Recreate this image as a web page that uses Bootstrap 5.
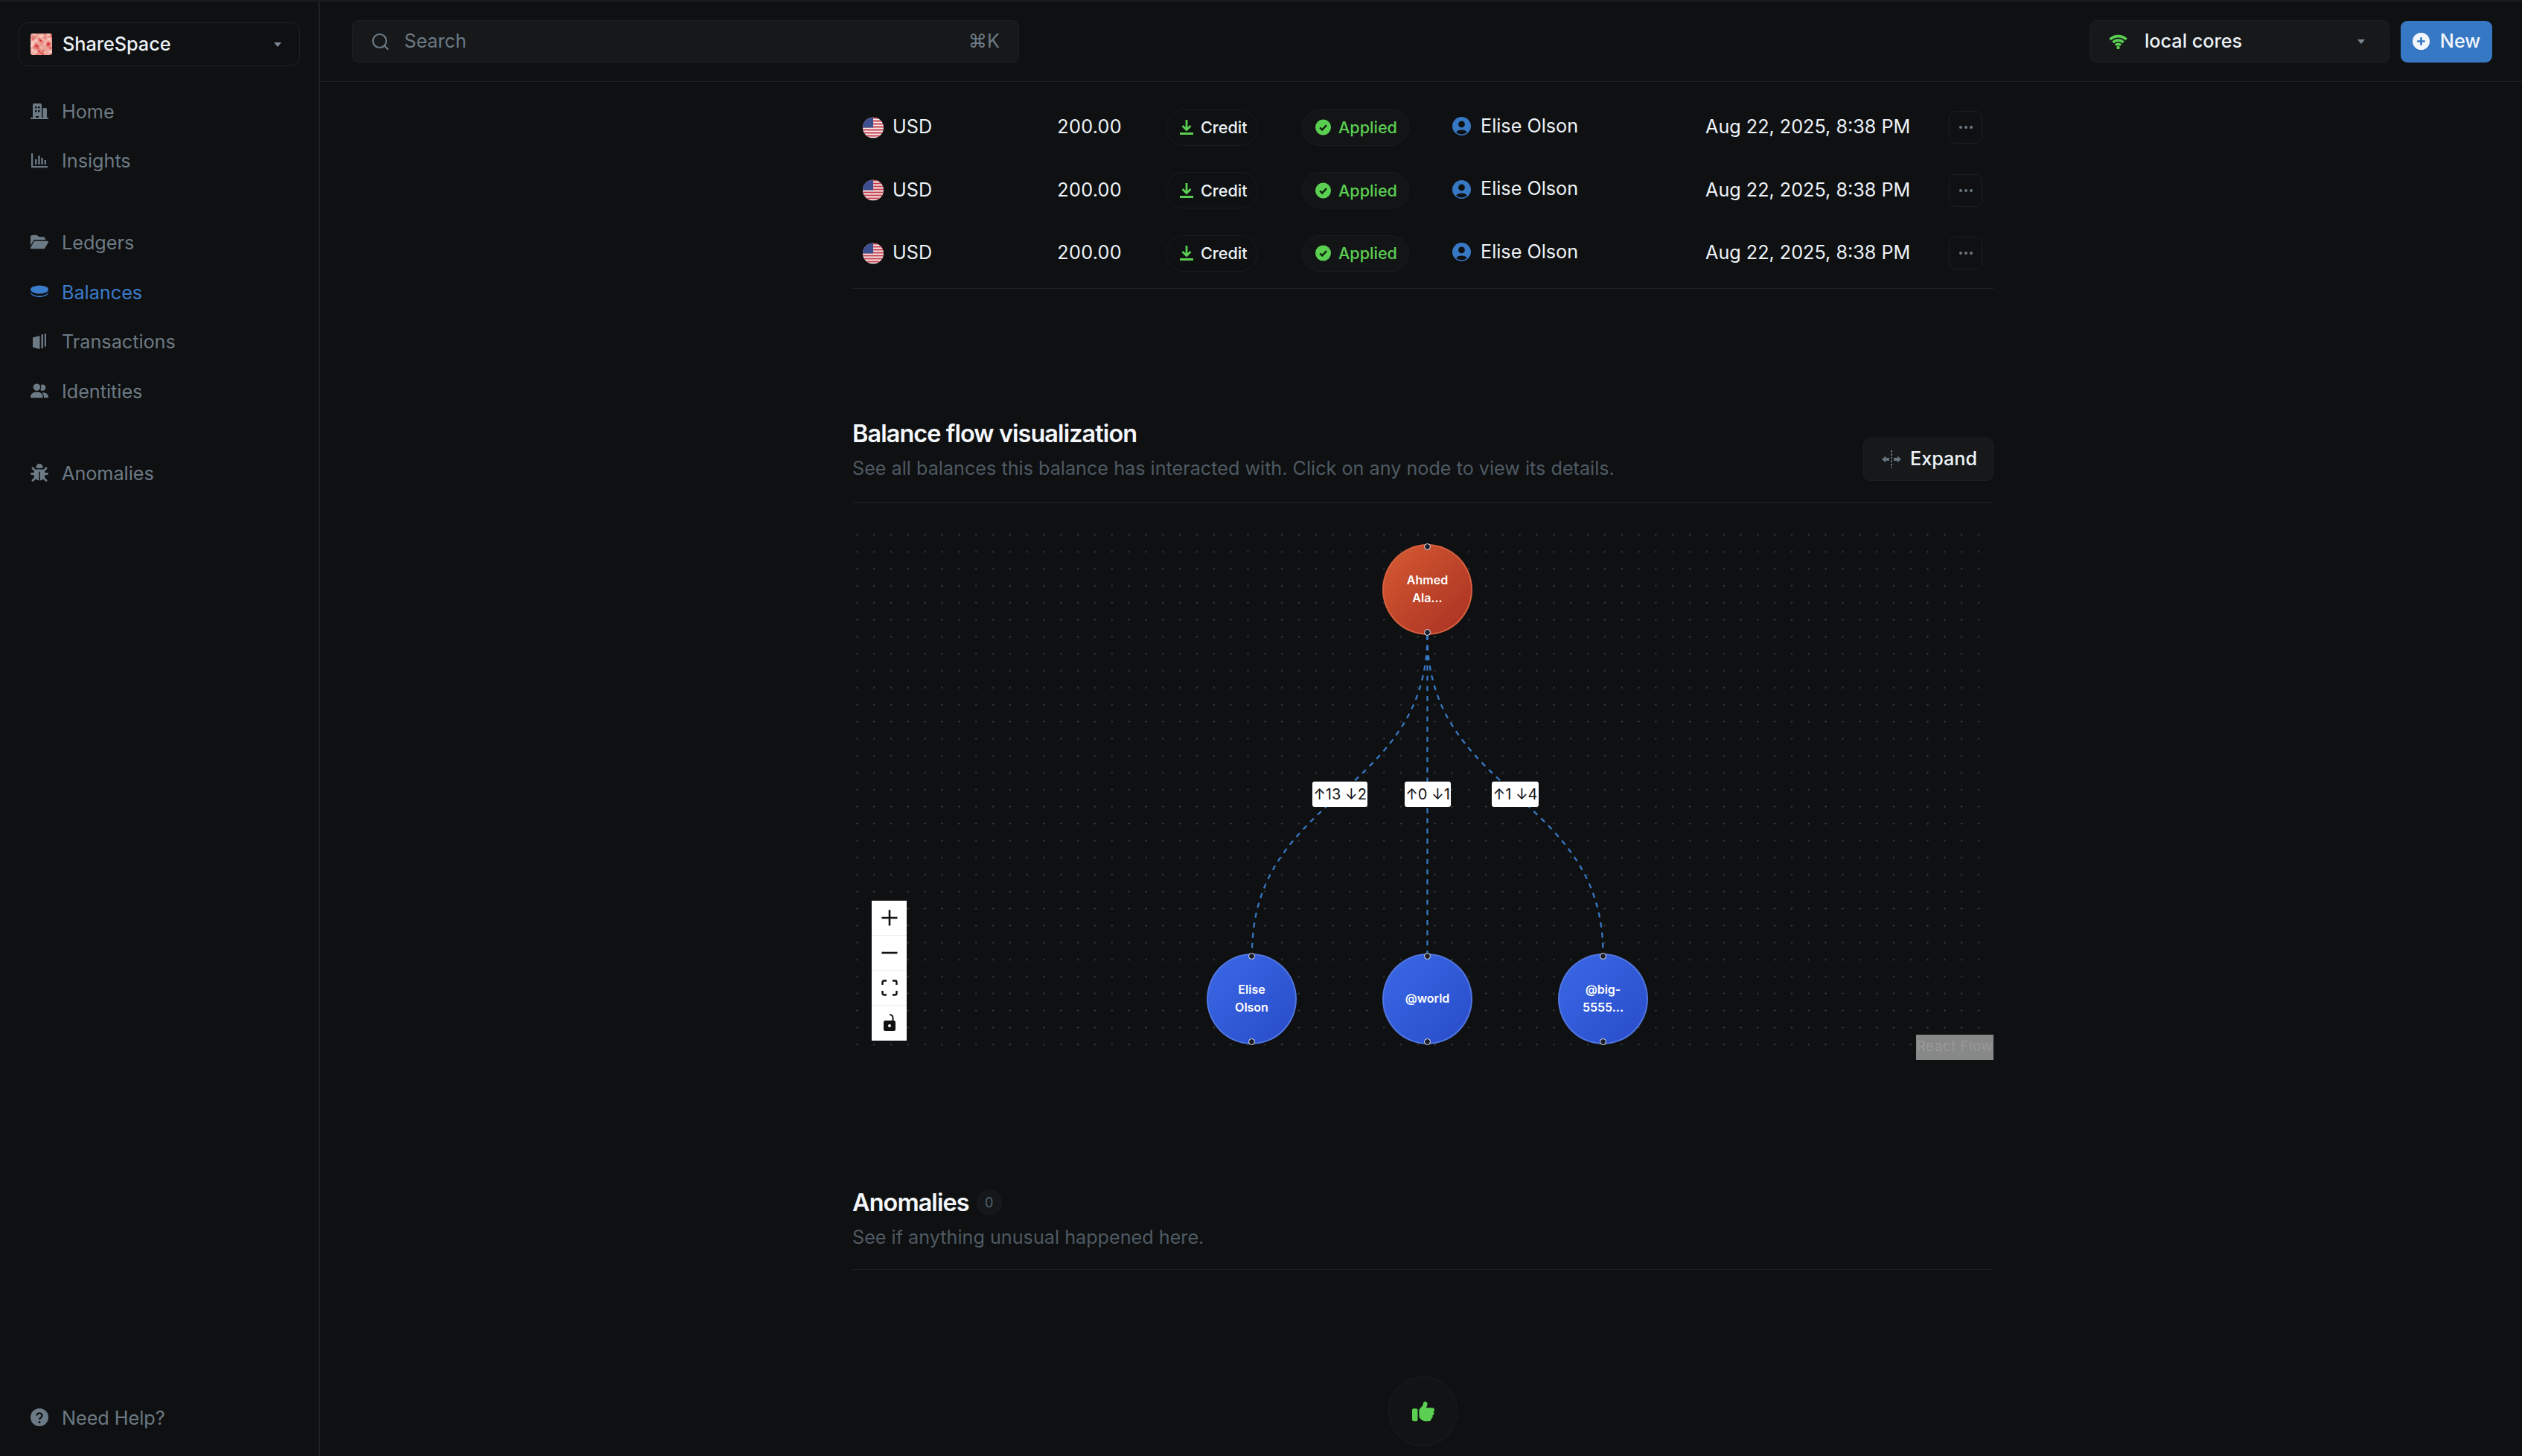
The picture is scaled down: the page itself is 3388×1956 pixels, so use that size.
<!DOCTYPE html>
<html lang="en">
<head>
<meta charset="utf-8">
<title>ShareSpace</title>
<link href="https://cdn.jsdelivr.net/npm/bootstrap@5.3.0/dist/css/bootstrap.min.css" rel="stylesheet">
<style>
:root{--pg:#0f1011;--line:#1e2123;--surf:#16181a;--mut:#6c7a85;--txt:#edf2f7;--sub:#4e5a64;--grn:#5bcf52;--blu:#3778c4}
html,body{height:100%}
body{background:var(--pg);color:var(--txt);font-family:Inter,"Liberation Sans",sans-serif;font-size:25.2px;overflow:hidden}
.shell{height:1956px;border-top:2px solid #191b1c}
.side{width:430px;flex:none;border-right:2px solid var(--line);padding:28px 25px 17px 25px}
.switcher{height:59px;border:1px solid var(--line);border-radius:13px;padding:0 24px 0 15px;margin-bottom:28.5px;font-size:25.2px;font-weight:500}
.logo{width:29px;height:29px;border-radius:3px;margin-right:14px;flex:none}
.caret{width:0;height:0;border-left:5.5px solid transparent;border-right:5.500px solid transparent;border-top:6px solid #7d8891}
.side .nav-link{height:66.5px;padding:0 0 0 16px;color:var(--mut);font-size:25.2px;display:flex;align-items:center;gap:18px}
.side .nav-link.current{color:#3b7ccb}
.nico{width:24px;height:24px;fill:currentColor;flex:none;margin-top:-4px}
.navgroup{margin-bottom:43.5px}
.topbar{height:108px;border-bottom:1px solid var(--line);padding:0 40px 0 43px}
.searchbox{width:896px;height:58px;background:var(--surf);border:1px solid #1b1e20;border-radius:9px;padding:1px 25px 0;color:var(--mut);font-size:25.2px}
.searchbox svg{width:24px;height:24px;margin-right:20px}
.core{width:403px;height:58px;background:var(--surf);border:1px solid #1b1e20;border-radius:9px;padding:0 32px 0 25px;margin-right:15px;font-size:25.2px;font-weight:500}
.core svg{width:25px;height:20px;margin-right:23px}
.btn-new{width:123px;height:56px;background:var(--blu);color:#f1f6fc;border:0;border-radius:9px;font-size:25.2px;font-weight:500;padding:0;gap:14px}
.btn-new svg{width:23px;height:23px}
.col-wrap{width:1533px;margin-left:715px;padding-top:19px}
.tx-table{table-layout:fixed;width:100%;margin:0 0 4px;--bs-table-bg:transparent;--bs-table-color:var(--txt);border-bottom:0}
.tx-table td{height:84.5px;padding:0;vertical-align:middle;font-size:25.2px;border:0;color:var(--txt)}
.c1{width:255px}.c2{width:152px}.c3{width:183px}.c4{width:202px}.c5{width:293px}.c6{width:370px}.c7{width:78px}
.tx-table td.p14{padding-left:14px}
.tx-table td.amt{text-align:right;padding-right:45px;letter-spacing:.3px}
.tx-table td.dt{padding-left:61px}
.tx-table td.act{padding-left:18px}
.flag{width:28px;height:29px;margin-right:12px;flex:none}
.pill{height:49px;border:1px solid #1a1d1f;border-radius:25px;font-size:21.6px;font-weight:500;gap:10px}
.pill svg{width:18px;height:20px}
.pill-credit{width:124px;padding:0 0 0 18px}
.pill-status{width:144px;color:var(--grn);background:#121415;padding:0 0 0 17px}
.pill-status svg{width:21px;height:22px}
.who svg{width:25px;height:25px;margin-right:13px}
.who{margin-top:-3px}
.more{width:45px;height:44px;border:1px solid #1c1f21;border-radius:9px}
.more svg{width:20px;height:6px}
.tbl-end{border-bottom:1px solid var(--line)}
.sec-head{border-bottom:1px solid var(--line);padding-bottom:28px;margin-top:175px}
.sec-title{font-size:32.4px;font-weight:600;line-height:40px;margin:0;letter-spacing:-.028em;color:#f4f8fc}
.sec-sub{font-size:25.2px;line-height:36px;margin:8px 0 0;color:var(--sub)}
.btn-expand{width:175px;height:58px;background:var(--surf);border:1px solid #1b1e20;border-radius:9px;color:var(--txt);font-size:25.2px;font-weight:500;padding:0 0 0 24px;gap:12px;margin-bottom:1px}
.btn-expand svg{width:26px;height:24px}
.flow{height:717px;margin-top:31px;background-image:radial-gradient(circle,#33363a 1px,transparent 1.4px);background-size:22.83px 22.83px;background-position:-5px 0;overflow:hidden}
.edges{position:absolute;left:0;top:0;width:100%;height:100%}
.edges path{fill:none;stroke:#3778c4;stroke-width:2.3;stroke-dasharray:6.84 6.84}
.fnode{position:absolute;width:121px;height:122px;border-radius:50%;display:flex;align-items:center;justify-content:center;text-align:center;font-size:16px;font-weight:600;line-height:23.5px;color:#fff}
.fnode-red{background:linear-gradient(135deg,#d65a32,#a83122);border:2px solid #d9603f;left:712px;top:24px}
.fnode-blue{background:linear-gradient(135deg,#3a68e6,#284cc9);border:2px solid #5176e0;top:574px}
.n1{left:476px}.n2{left:712px}.n3{left:948px}
.hdl{position:absolute;left:50%;width:9px;height:9px;margin-left:-4.5px;border-radius:50%;background:#1b1e2c;border:1px solid #e6e9ef}
.hdl-t{top:-3px}.hdl-b{bottom:-3px}
.elabel{position:absolute;top:343px;height:34px;background:#fff;color:#111;border-radius:3px;font-size:20px;display:flex;align-items:center;justify-content:center;white-space:nowrap}
.l1{left:618px;width:74px}.l2{left:742px;width:62px}.l3{left:859px;width:63px}
.zoombar{position:absolute;left:26px;top:503px;width:47px;background:#fff}
.zoombar div{height:47px;border-bottom:1px solid #eee}
.zoombar div:last-child{border:0}
.zoombar svg{width:24px;height:24px}
.attrib{position:absolute;right:0;bottom:0;width:104px;height:34px;background:rgba(255,255,255,.5);color:#999;font-size:19px;letter-spacing:.02em}
.count{width:34px;height:35px;border-radius:50%;background:#14181a;color:#56626c;font-size:18px;margin-left:10px}
.anom-head{margin-top:172px;border-bottom:1px solid var(--line);padding-bottom:25px}
.anom-head .sec-sub{margin-top:8px}
.okbadge{width:93px;height:94px;border:1px solid #1a1d1f;border-radius:50%;background:#111314;margin:143px auto 0}
.okbadge svg{width:30px;height:30px;fill:var(--grn)}
</style>
</head>
<body>
<div class="shell d-flex">
  <aside class="side d-flex flex-column">
    <div class="switcher d-flex align-items-center">
      <svg class="logo" viewBox="0 0 29 29"><defs><filter id="marble" x="0" y="0" width="100%" height="100%"><feTurbulence type="fractalNoise" baseFrequency=".14" numOctaves="3" seed="7"/><feColorMatrix values="0.5 0 0 0 0.58  1.3 0 0 0 -0.32  1.1 0 0 0 -0.26  0 0 0 0 1"/></filter></defs><rect width="29" height="29" filter="url(#marble)"/></svg>
      <span class="flex-fill">ShareSpace</span><span class="caret"></span>
    </div>
    <nav class="nav flex-column navgroup">
      <a class="nav-link" href="#"><svg class="nico" viewBox="0 0 24 24"><path fill-rule="evenodd" d="M3 22V3.600A1.600 1.600 0 0 1 4.600 2h8.800A1.600 1.600 0 0 1 15 3.600V22h-4v-3H7v3zM6 6v2.500h2.500V6zm4 0v2.500h2.500V6zm-4 5v2.500h2.500V11zm4 0v2.500h2.500V11z"/><path d="M16.500 8h4A1.500 1.500 0 0 1 22 9.500V22h-5.500zM0 21h24v2H0z"/></svg>Home</a>
      <a class="nav-link" href="#"><svg class="nico" viewBox="0 0 24 24"><path d="M1 3h2.200v17H23v2.200H1zM6 11h2.400v7H6zM10.200 6h2.400v12h-2.400zM14.400 9h2.400v9h-2.400zM18.600 12H21v6h-2.400z"/></svg>Insights</a>
    </nav>
    <nav class="nav flex-column navgroup">
      <a class="nav-link" href="#"><svg class="nico" viewBox="0 0 576 512"><path d="M88.700 223.800L0 375.800V96C0 60.700 28.700 32 64 32H181.500c17 0 33.300 6.700 45.300 18.700l26.500 26.500c12 12 28.300 18.700 45.300 18.700H416c35.300 0 64 28.700 64 64v32H144c-22.800 0-43.800 12.100-55.300 31.800zm27.600 16.100C122.100 230 132.600 224 144 224H544c11.500 0 22 6.100 27.700 16.100s5.700 22.200-.1 32.100l-112 192C453.900 474 443.400 480 432 480H32c-11.500 0-22-6.100-27.700-16.100s-5.700-22.200 .1-32.100l112-192z"/></svg>Ledgers</a>
      <a class="nav-link current" href="#"><svg class="nico" viewBox="0 0 24 24"><ellipse cx="12" cy="9" rx="12" ry="5.500"/><path d="M0 11.500C1 15.500 6 17.500 12 17.500s11-2 12-6v1.500c-.5 3.800-5.500 6-12 6S.5 16.800 0 13z"/></svg>Balances</a>
      <a class="nav-link" href="#"><svg class="nico" viewBox="0 0 24 24"><path d="M3 7.500 12.500 5v18L3 20.500z"/><path d="M14.500 3.500 17 3v18.500l-2.500.5zM18.800 2.500 21 2v17.200l-2.200.6z"/></svg>Transactions</a>
      <a class="nav-link" href="#"><svg class="nico" viewBox="0 0 640 512"><path d="M96 128a128 128 0 1 1 256 0A128 128 0 1 1 96 128zM0 482.300C0 383.800 79.800 304 178.300 304h91.400C368.200 304 448 383.800 448 482.300c0 16.400-13.300 29.700-29.700 29.700H29.700C13.300 512 0 498.700 0 482.300zM609.300 512H471.400c5.400-9.400 8.600-20.300 8.600-32v-8c0-60.700-27.100-115.200-69.800-151.800c2.400-.1 4.700-.2 7.100-.2h61.400C567.800 320 640 392.200 640 481.300c0 17-13.800 30.700-30.700 30.700zM432 256c-31 0-59-12.600-79.300-32.900C372.400 196.500 384 163.600 384 128c0-26.800-6.600-52.100-18.300-74.300C384.300 40.100 407.200 32 432 32c61.900 0 112 50.100 112 112s-50.100 112-112 112z"/></svg>Identities</a>
    </nav>
    <nav class="nav flex-column">
      <a class="nav-link" href="#"><svg class="nico" viewBox="0 0 512 512"><path d="M256 0c53 0 96 43 96 96v3.600c0 15.700-12.700 28.400-28.400 28.400H188.400c-15.700 0-28.400-12.700-28.400-28.400V96c0-53 43-96 96-96zM41.400 105.400c12.500-12.500 32.800-12.500 45.300 0l64 64c.7 .7 1.300 1.400 1.900 2.100c14.200-7.300 30.400-11.400 47.500-11.400H312c17.100 0 33.200 4.100 47.500 11.400c.6-.7 1.200-1.400 1.900-2.100l64-64c12.500-12.500 32.800-12.500 45.300 0s12.500 32.800 0 45.300l-64 64c-.7 .7-1.400 1.300-2.100 1.900c6.200 12 10.100 25.300 11.100 39.500H480c17.700 0 32 14.300 32 32s-14.300 32-32 32H416c0 24.600-5.500 47.800-15.400 68.600c2.200 1.300 4.200 2.900 6 4.800l64 64c12.500 12.500 12.500 32.800 0 45.300s-32.800 12.500-45.300 0l-63.100-63.100c-24.500 21.800-55.800 36.200-90.300 39.600V240c0-8.800-7.200-16-16-16s-16 7.200-16 16V479.200c-34.500-3.400-65.800-17.800-90.300-39.600L86.600 502.600c-12.500 12.500-32.800 12.500-45.300 0s-12.500-32.800 0-45.300l64-64c1.900-1.900 3.900-3.400 6-4.800C101.500 367.800 96 344.600 96 320H32c-17.700 0-32-14.300-32-32s14.300-32 32-32H96.300c1.100-14.100 5-27.500 11.100-39.500c-.7-.6-1.400-1.200-2.100-1.900l-64-64c-12.500-12.500-12.500-32.800 0-45.300z"/></svg>Anomalies</a>
    </nav>
    <nav class="nav flex-column mt-auto">
      <a class="nav-link" href="#"><svg class="nico" viewBox="0 0 24 24"><circle cx="12" cy="12" r="12"/><path d="M8.500 9.500a3.500 3.200 0 1 1 5.500 2.700c-1.300.9-2 1.400-2 2.800" fill="none" stroke="#0f1011" stroke-width="2.400"/><circle cx="12" cy="18.500" r="1.500" fill="#0f1011"/></svg>Need Help?</a>
    </nav>
  </aside>
  <main class="flex-fill overflow-hidden">
    <header class="topbar d-flex align-items-center">
      <div class="searchbox d-flex align-items-center">
        <svg viewBox="0 0 24 24" fill="none" stroke="#6c7a85" stroke-width="2.200"><circle cx="11" cy="11" r="9"/><path d="m17.500 17.500 5 5"/></svg>
        <span class="flex-fill">Search</span><span>⌘K</span>
      </div>
      <div class="core d-flex align-items-center ms-auto">
        <svg viewBox="0 0 25 20" fill="none" stroke="#5bcf52" stroke-width="3.600"><path d="M1.500 7a16 16 0 0 1 22 0M5.500 11a10 10 0 0 1 14 0M9 14.800a5 5 0 0 1 7 0"/><circle cx="12.500" cy="18" r="2.200" fill="#5bcf52" stroke="none"/></svg>
        <span class="flex-fill">local cores</span><span class="caret"></span>
      </div>
      <button class="btn btn-new d-flex align-items-center justify-content-center" type="button"><svg viewBox="0 0 24 24"><circle cx="12" cy="12" r="12" fill="#f1f6fc"/><path d="M12 6.500v11M6.500 12h11" stroke="#3778c4" stroke-width="2.800"/></svg>New</button>
    </header>
    <div class="col-wrap">
      <div class="tbl-end">
      <table class="table tx-table">
        <colgroup><col class="c1"><col class="c2"><col class="c3"><col class="c4"><col class="c5"><col class="c6"><col class="c7"></colgroup>
        <tbody>
        <tr>
          <td class="p14"><div class="d-flex align-items-center"><svg class="flag" viewBox="0 0 28 28"><defs><clipPath id="fc"><circle cx="14" cy="14" r="14"/></clipPath></defs><g clip-path="url(#fc)"><rect width="28" height="28" fill="#f3ecec"/><path d="M0 0h28v2H0zM0 4h28v2H0zM0 8h28v2H0zM0 12h28v2H0zM0 16h28v2H0zM0 20h28v2H0zM0 24h28v2H0z" fill="#c9404f"/><rect width="14" height="14" fill="#3b4f8f"/></g></svg>USD</div></td>
          <td class="amt">200.00</td>
          <td class="p14"><div class="pill pill-credit d-inline-flex align-items-center"><svg viewBox="0 0 18 20"><path d="M9 0v13M3.500 8 9 13.500 14.500 8" fill="none" stroke="#5bcf52" stroke-width="2.800"/><path d="M0 17h18v3H0z" fill="#5bcf52"/></svg>Credit</div></td>
          <td class="p14"><div class="pill pill-status d-inline-flex align-items-center"><svg viewBox="0 0 22 22"><circle cx="11" cy="11" r="11" fill="#5bcf52"/><path d="m6.500 11.300 3.200 3.200 6-6.500" fill="none" stroke="#10230f" stroke-width="2.600"/></svg>Applied</div></td>
          <td class="p14"><div class="who d-flex align-items-center"><svg viewBox="0 0 24 24"><circle cx="12" cy="12" r="12" fill="#3778c4"/><circle cx="12" cy="9.500" r="4.200" fill="#0f1011"/><path d="M5 20a7.500 5 0 0 1 14 0 11 11 0 0 1-14 0" fill="#0f1011"/></svg>Elise Olson</div></td>
          <td class="dt">Aug 22, 2025, 8:38 PM</td>
          <td class="act"><div class="more d-flex align-items-center justify-content-center"><svg viewBox="0 0 20 6" fill="#6c7a85"><circle cx="3" cy="3" r="2"/><circle cx="10" cy="3" r="2"/><circle cx="17" cy="3" r="2"/></svg></div></td>
        </tr>
        <tr>
          <td class="p14"><div class="d-flex align-items-center"><svg class="flag" viewBox="0 0 28 28"><g clip-path="url(#fc)"><rect width="28" height="28" fill="#f3ecec"/><path d="M0 0h28v2H0zM0 4h28v2H0zM0 8h28v2H0zM0 12h28v2H0zM0 16h28v2H0zM0 20h28v2H0zM0 24h28v2H0z" fill="#c9404f"/><rect width="14" height="14" fill="#3b4f8f"/></g></svg>USD</div></td>
          <td class="amt">200.00</td>
          <td class="p14"><div class="pill pill-credit d-inline-flex align-items-center"><svg viewBox="0 0 18 20"><path d="M9 0v13M3.500 8 9 13.500 14.500 8" fill="none" stroke="#5bcf52" stroke-width="2.800"/><path d="M0 17h18v3H0z" fill="#5bcf52"/></svg>Credit</div></td>
          <td class="p14"><div class="pill pill-status d-inline-flex align-items-center"><svg viewBox="0 0 22 22"><circle cx="11" cy="11" r="11" fill="#5bcf52"/><path d="m6.500 11.300 3.200 3.200 6-6.500" fill="none" stroke="#10230f" stroke-width="2.600"/></svg>Applied</div></td>
          <td class="p14"><div class="who d-flex align-items-center"><svg viewBox="0 0 24 24"><circle cx="12" cy="12" r="12" fill="#3778c4"/><circle cx="12" cy="9.500" r="4.200" fill="#0f1011"/><path d="M5 20a7.500 5 0 0 1 14 0 11 11 0 0 1-14 0" fill="#0f1011"/></svg>Elise Olson</div></td>
          <td class="dt">Aug 22, 2025, 8:38 PM</td>
          <td class="act"><div class="more d-flex align-items-center justify-content-center"><svg viewBox="0 0 20 6" fill="#6c7a85"><circle cx="3" cy="3" r="2"/><circle cx="10" cy="3" r="2"/><circle cx="17" cy="3" r="2"/></svg></div></td>
        </tr>
        <tr>
          <td class="p14"><div class="d-flex align-items-center"><svg class="flag" viewBox="0 0 28 28"><g clip-path="url(#fc)"><rect width="28" height="28" fill="#f3ecec"/><path d="M0 0h28v2H0zM0 4h28v2H0zM0 8h28v2H0zM0 12h28v2H0zM0 16h28v2H0zM0 20h28v2H0zM0 24h28v2H0z" fill="#c9404f"/><rect width="14" height="14" fill="#3b4f8f"/></g></svg>USD</div></td>
          <td class="amt">200.00</td>
          <td class="p14"><div class="pill pill-credit d-inline-flex align-items-center"><svg viewBox="0 0 18 20"><path d="M9 0v13M3.500 8 9 13.500 14.500 8" fill="none" stroke="#5bcf52" stroke-width="2.800"/><path d="M0 17h18v3H0z" fill="#5bcf52"/></svg>Credit</div></td>
          <td class="p14"><div class="pill pill-status d-inline-flex align-items-center"><svg viewBox="0 0 22 22"><circle cx="11" cy="11" r="11" fill="#5bcf52"/><path d="m6.500 11.300 3.200 3.200 6-6.500" fill="none" stroke="#10230f" stroke-width="2.600"/></svg>Applied</div></td>
          <td class="p14"><div class="who d-flex align-items-center"><svg viewBox="0 0 24 24"><circle cx="12" cy="12" r="12" fill="#3778c4"/><circle cx="12" cy="9.500" r="4.200" fill="#0f1011"/><path d="M5 20a7.500 5 0 0 1 14 0 11 11 0 0 1-14 0" fill="#0f1011"/></svg>Elise Olson</div></td>
          <td class="dt">Aug 22, 2025, 8:38 PM</td>
          <td class="act"><div class="more d-flex align-items-center justify-content-center"><svg viewBox="0 0 20 6" fill="#6c7a85"><circle cx="3" cy="3" r="2"/><circle cx="10" cy="3" r="2"/><circle cx="17" cy="3" r="2"/></svg></div></td>
        </tr>
        </tbody>
      </table>
      </div>

      <section class="sec-head d-flex justify-content-between align-items-end">
        <div>
          <h2 class="sec-title">Balance flow visualization</h2>
          <p class="sec-sub">See all balances this balance has interacted with. Click on any node to view its details.</p>
        </div>
        <button class="btn btn-expand d-flex align-items-center" type="button"><svg viewBox="0 0 26 24"><path d="M0 12l5-4.500v2.500h5v4H5v2.500zM26 12l-5-4.500v2.500h-5v4h5v2.500z" fill="#66737d"/><path d="M13 0v24" stroke="#66737d" stroke-width="2" stroke-dasharray="2.500 2"/></svg>Expand</button>
      </section>

      <div class="flow position-relative">
        <svg class="edges" viewBox="0 0 1533 717"><path d="M772.500 146C772.500 360 537 360 537 574"/><path d="M772.500 146V574"/><path d="M772.500 146C772.500 360 1008.500 360 1008.500 574"/></svg>
        <div class="fnode fnode-red"><span class="hdl hdl-t"></span>Ahmed<br>Ala...<span class="hdl hdl-b"></span></div>
        <div class="fnode fnode-blue n1"><span class="hdl hdl-t"></span>Elise<br>Olson<span class="hdl hdl-b"></span></div>
        <div class="fnode fnode-blue n2"><span class="hdl hdl-t"></span>@world<span class="hdl hdl-b"></span></div>
        <div class="fnode fnode-blue n3"><span class="hdl hdl-t"></span>@big-<br>5555...<span class="hdl hdl-b"></span></div>
        <div class="elabel l1">↑13 ↓2</div>
        <div class="elabel l2">↑0 ↓1</div>
        <div class="elabel l3">↑1 ↓4</div>
        <div class="zoombar">
          <div class="d-flex align-items-center justify-content-center"><svg viewBox="0 0 24 24"><path d="M12 1.500v21M1.500 12h21" stroke="#111" stroke-width="2.600"/></svg></div>
          <div class="d-flex align-items-center justify-content-center"><svg viewBox="0 0 24 24"><path d="M1.500 12h21" stroke="#111" stroke-width="2.600"/></svg></div>
          <div class="d-flex align-items-center justify-content-center"><svg viewBox="0 0 24 24"><path d="M8 2.500H4.500a2 2 0 0 0-2 2V8M16 2.500h3.500a2 2 0 0 1 2 2V8M8 21.500H4.500a2 2 0 0 1-2-2V16M16 21.500h3.500a2 2 0 0 0 2-2V16" fill="none" stroke="#111" stroke-width="2.400"/></svg></div>
          <div class="d-flex align-items-center justify-content-center"><svg viewBox="0 0 24 24"><rect x="4" y="9" width="16" height="14" rx="2.500" fill="#111"/><path d="M12 1a4.500 4.500 0 0 1 4.500 4.500V10" fill="none" stroke="#111" stroke-width="2"/><circle cx="12" cy="16" r="2" fill="#fff"/></svg></div>
        </div>
        <div class="attrib d-flex align-items-center justify-content-center">React Flow</div>
      </div>

      <section class="anom-head">
        <div class="d-flex align-items-center"><h2 class="sec-title">Anomalies</h2><span class="count d-inline-flex align-items-center justify-content-center">0</span></div>
        <p class="sec-sub">See if anything unusual happened here.</p>
      </section>
      <div class="okbadge d-flex align-items-center justify-content-center"><svg viewBox="0 0 512 512"><path d="M313.400 32.900c26 5.200 42.900 30.500 37.700 56.500l-2.300 11.400c-5.300 26.700-15.100 52.100-28.800 75.200H464c26.500 0 48 21.500 48 48c0 18.500-10.500 34.600-25.900 42.600C497 275.400 504 288.900 504 304c0 23.400-16.800 42.900-38.900 47.100c4.400 7.300 6.900 15.800 6.900 24.900c0 21.300-13.900 39.400-33.100 45.600c.7 3.300 1.100 6.800 1.100 10.400c0 26.500-21.500 48-48 48H294.500c-19 0-37.500-5.600-53.300-16.100l-38.500-25.700C176 420.400 160 390.400 160 358.300V320 272 247.100c0-29.200 13.300-56.700 36-75l7.400-5.900c26.500-21.200 44.600-51 51.200-84.200l2.300-11.400c5.200-26 30.500-42.900 56.500-37.700zM32 192H96c17.700 0 32 14.300 32 32V448c0 17.700-14.300 32-32 32H32c-17.700 0-32-14.300-32-32V224c0-17.700 14.300-32 32-32z"/></svg></div>
    </div>
  </main>
</div>
<script src="https://cdn.jsdelivr.net/npm/bootstrap@5.3.0/dist/js/bootstrap.bundle.min.js"></script>
</body>
</html>
